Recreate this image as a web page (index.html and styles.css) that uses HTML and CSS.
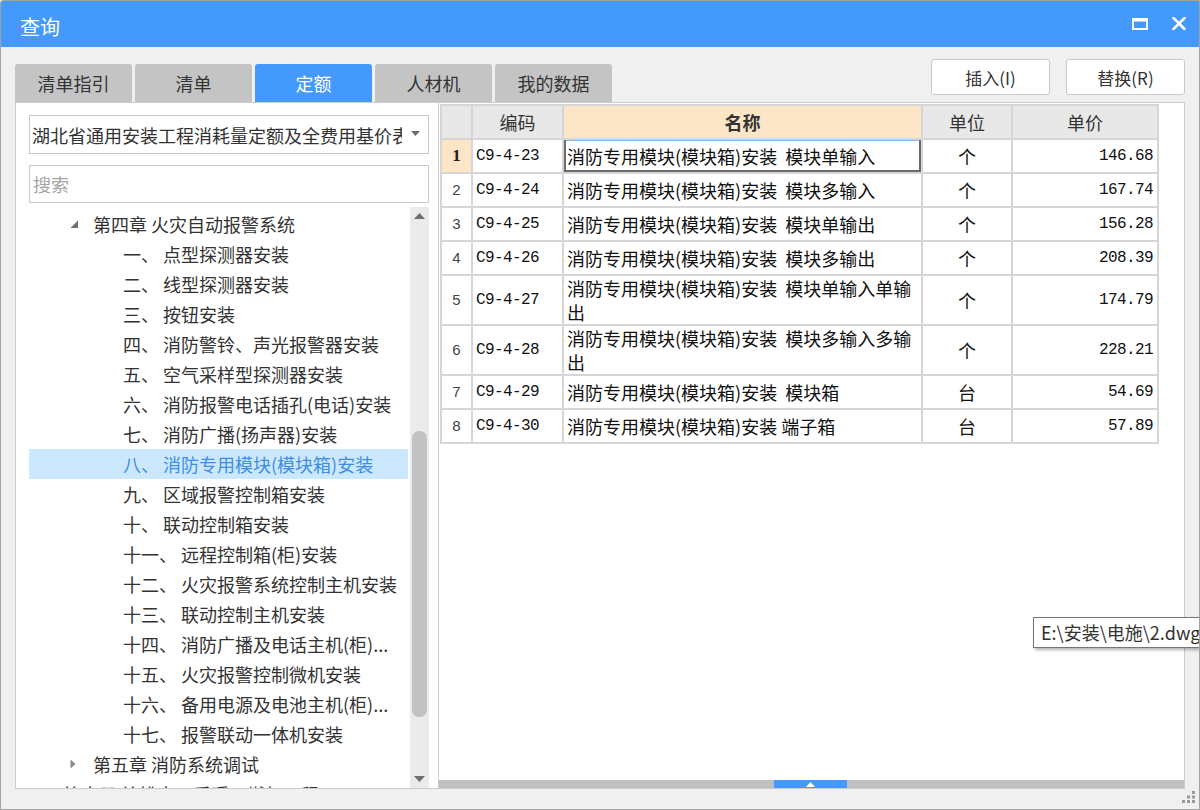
FILE: index.html
```html
<!DOCTYPE html>
<html lang="zh-CN">
<head>
<meta charset="utf-8">
<title>查询</title>
<link rel="stylesheet" href="styles.css">
</head>
<body>
<div class="window">
  <div class="titlebar">
    <span class="title">查询</span>
    <div class="win-ctrls">
      <svg class="ico-max" width="16" height="12" viewBox="0 0 16 12"><rect x="1" y="1.5" width="14" height="9.5" fill="none" stroke="#fff" stroke-width="2"/><rect x="0" y="0" width="16" height="3.5" fill="#fff"/></svg>
      <svg class="ico-close" width="14" height="13" viewBox="0 0 14 13"><path d="M1.5 1 L12.5 12 M12.5 1 L1.5 12" stroke="#fff" stroke-width="2.6" stroke-linecap="square"/></svg>
    </div>
  </div>
  <div class="body">
    <div class="toolbar">
      <div class="tabs">
        <div class="tab">清单指引</div>
        <div class="tab">清单</div>
        <div class="tab active">定额</div>
        <div class="tab">人材机</div>
        <div class="tab">我的数据</div>
      </div>
      <div class="actions">
        <button class="btn">插入(I)</button>
        <button class="btn">替换(R)</button>
      </div>
    </div>
    <div class="panes">
      <div class="left">
        <div class="combo">
          <span class="combo-text">湖北省通用安装工程消耗量定额及全费用基价表</span>
          <span class="combo-arrow"><svg width="9" height="5" viewBox="0 0 9 5"><polygon points="0,0 9,0 4.5,5" fill="#6d6d6d"/></svg></span>
        </div>
        <input class="search" type="text" placeholder="搜索">
        <div class="tree-wrap">
          <div class="tree">
            <div class="row lv1"><span class="twisty"><svg width="9" height="9" viewBox="0 0 9 9"><polygon points="8,0.5 8,8 0.5,8" fill="#707070"/></svg></span><span>第四章 火灾自动报警系统</span></div>
            <div class="row lv2">一、 点型探测器安装</div>
            <div class="row lv2">二、 线型探测器安装</div>
            <div class="row lv2">三、 按钮安装</div>
            <div class="row lv2">四、 消防警铃、声光报警器安装</div>
            <div class="row lv2">五、 空气采样型探测器安装</div>
            <div class="row lv2">六、 消防报警电话插孔(电话)安装</div>
            <div class="row lv2">七、 消防广播(扬声器)安装</div>
            <div class="row lv2 selected">八、 消防专用模块(模块箱)安装</div>
            <div class="row lv2">九、 区域报警控制箱安装</div>
            <div class="row lv2">十、 联动控制箱安装</div>
            <div class="row lv2">十一、 远程控制箱(柜)安装</div>
            <div class="row lv2">十二、 火灾报警系统控制主机安装</div>
            <div class="row lv2">十三、 联动控制主机安装</div>
            <div class="row lv2">十四、 消防广播及电话主机(柜)...</div>
            <div class="row lv2">十五、 火灾报警控制微机安装</div>
            <div class="row lv2">十六、 备用电源及电池主机(柜)...</div>
            <div class="row lv2">十七、 报警联动一体机安装</div>
            <div class="row lv1"><span class="twisty"><svg width="6" height="10" viewBox="0 0 6 10"><polygon points="0.5,0.5 5.5,5 0.5,9.5" fill="#8a8a8a"/></svg></span><span>第五章 消防系统调试</span></div>
            <div class="row lv0">第十册 给排水、采暖、燃气工程</div>
          </div>
          <div class="vscroll">
            <div class="varrow"><svg width="11" height="6" viewBox="0 0 11 6"><polygon points="0,6 11,6 5.5,0" fill="#6e6e6e"/></svg></div>
            <div class="vtrack"><div class="vthumb"></div></div>
            <div class="varrow"><svg width="11" height="6" viewBox="0 0 11 6"><polygon points="0,0 11,0 5.5,6" fill="#6e6e6e"/></svg></div>
          </div>
        </div>
      </div>
      <div class="right">
        <div class="grid-area">
          <table class="grid">
            <colgroup><col class="c-num"><col class="c-code"><col class="c-name"><col class="c-unit"><col class="c-price"></colgroup>
            <thead>
              <tr><th></th><th>编码</th><th class="h-name">名称</th><th>单位</th><th>单价</th></tr>
            </thead>
            <tbody>
              <tr><td class="num cur">1</td><td class="code cur-code">C9-4-23</td><td class="name focus">消防专用模块(模块箱)安装&nbsp; 模块单输入</td><td class="unit">个</td><td class="price">146.68</td></tr>
              <tr><td class="num">2</td><td class="code">C9-4-24</td><td class="name">消防专用模块(模块箱)安装&nbsp; 模块多输入</td><td class="unit">个</td><td class="price">167.74</td></tr>
              <tr><td class="num">3</td><td class="code">C9-4-25</td><td class="name">消防专用模块(模块箱)安装&nbsp; 模块单输出</td><td class="unit">个</td><td class="price">156.28</td></tr>
              <tr><td class="num">4</td><td class="code">C9-4-26</td><td class="name">消防专用模块(模块箱)安装&nbsp; 模块多输出</td><td class="unit">个</td><td class="price">208.39</td></tr>
              <tr class="tall"><td class="num">5</td><td class="code">C9-4-27</td><td class="name">消防专用模块(模块箱)安装&nbsp; 模块单输入单输<br>出</td><td class="unit">个</td><td class="price">174.79</td></tr>
              <tr class="tall"><td class="num">6</td><td class="code">C9-4-28</td><td class="name">消防专用模块(模块箱)安装&nbsp; 模块多输入多输<br>出</td><td class="unit">个</td><td class="price">228.21</td></tr>
              <tr><td class="num">7</td><td class="code">C9-4-29</td><td class="name">消防专用模块(模块箱)安装&nbsp; 模块箱</td><td class="unit">台</td><td class="price">54.69</td></tr>
              <tr><td class="num">8</td><td class="code">C9-4-30</td><td class="name">消防专用模块(模块箱)安装 端子箱</td><td class="unit">台</td><td class="price">57.89</td></tr>
            </tbody>
          </table>
        </div>
        <div class="hscroll"><div class="hthumb"><svg width="9" height="5" viewBox="0 0 9 5"><polygon points="0,5 9,5 4.5,0" fill="#fff"/></svg></div></div>
      </div>
    </div>
    <div class="statusbar">
      <svg class="grip" width="14" height="12" viewBox="0 0 14 12"><rect x="10" y="0" width="3" height="3" fill="#9a9a9a"/><rect x="5" y="4.5" width="3" height="3" fill="#9a9a9a"/><rect x="10" y="4.5" width="3" height="3" fill="#9a9a9a"/><rect x="0" y="9" width="3" height="3" fill="#9a9a9a"/><rect x="5" y="9" width="3" height="3" fill="#9a9a9a"/><rect x="10" y="9" width="3" height="3" fill="#9a9a9a"/></svg>
    </div>
  </div>
  <div class="tooltip">E:\安装\电施\2.dwg</div>
</div>
</body>
</html>
```

FILE: styles.css
```css
html, body {
  margin: 0;
  padding: 0;
  overflow: hidden;
  background: #f0f0f0;
}

.window {
  position: relative;
  width: 1200px;
  height: 810px;
  box-sizing: border-box;
  border: 1px solid #a3a3a3;
  border-top-left-radius: 3px;
  background: #f0f0f0;
  overflow: hidden;
  display: flex;
  flex-direction: column;
  font-family: "Noto Sans CJK SC", "Noto Sans", sans-serif;
  color: #333;
}

.titlebar {
  height: 46px;
  flex: none;
  background: #4499fc;
  display: flex;
  align-items: center;
  padding: 0 13px 0 19px;
}

.title {
  color: #fff;
  font-size: 20px;
  flex: 1;
  line-height: 1;
  margin-top: 6px;
}

.win-ctrls {
  display: flex;
  align-items: center;
  gap: 24px;
  margin-top: -1px;
}

.body {
  flex: 1;
  display: flex;
  flex-direction: column;
  padding: 0 14px 0 14px;
  min-height: 0;
}

.toolbar {
  height: 55px;
  flex: none;
  display: flex;
  justify-content: space-between;
}

.tabs {
  display: flex;
  gap: 3px;
  margin-top: 17px;
}

.tab {
  width: 117px;
  height: 38px;
  box-sizing: border-box;
  background: #c4c4c4;
  border-radius: 3px 3px 0 0;
  font-size: 18px;
  line-height: 38px;
  text-align: center;
  color: #333;
}

.tab.active {
  background: #4499fc;
  color: #fff;
}

.actions {
  display: flex;
  gap: 16px;
  margin-top: 12px;
}

.btn {
  width: 119px;
  height: 36px;
  box-sizing: border-box;
  background: #fff;
  border: 1px solid #c9c9c9;
  border-radius: 3px;
  font-family: "Noto Sans CJK SC", "Noto Sans", sans-serif;
  font-size: 17px;
  color: #333;
  padding: 0;
}

.panes {
  flex: 1;
  display: flex;
  min-height: 0;
}

.left {
  width: 423px;
  box-sizing: border-box;
  background: #fff;
  border: 1px solid #cdcdcd;
  border-right: none;
  padding: 12px 9px 0 13px;
  display: flex;
  flex-direction: column;
  min-height: 0;
}

.combo {
  height: 39px;
  flex: none;
  box-sizing: border-box;
  border: 1px solid #c8c8c8;
  display: flex;
  align-items: center;
  padding-left: 2px;
  overflow: hidden;
}

.combo-text {
  flex: 1;
  white-space: nowrap;
  overflow: hidden;
  font-size: 18px;
  color: #333;
}

.combo-arrow {
  width: 26px;
  flex: none;
  display: flex;
  justify-content: center;
  align-items: center;
  margin-top: -2px;
}

.search {
  display: block;
  height: 38px;
  flex: none;
  margin: 11px 0 0;
  box-sizing: border-box;
  border: 1px solid #c8c8c8;
  padding: 0 0 0 3px;
  outline: none;
  width: 100%;
  font-family: "Noto Sans CJK SC", "Noto Sans", sans-serif;
  font-size: 18px;
  color: #333;
  background: #fff;
}

.search::placeholder {
  color: #a6a6a6;
}

.tree-wrap {
  flex: 1;
  margin-top: 4px;
  display: flex;
  min-height: 0;
  overflow: hidden;
}

.tree {
  flex: 1;
  padding-top: 2px;
  overflow: hidden;
  margin-right: 2px;
}

.row {
  height: 30px;
  line-height: 30px;
  font-size: 18px;
  color: #333;
  white-space: nowrap;
  display: flex;
  align-items: center;
}

.row.lv0 {
  padding-left: 34px;
}

.row.lv1 {
  padding-left: 38px;
}

.row.lv2 {
  padding-left: 94px;
}

.twisty {
  width: 26px;
  display: flex;
  align-items: center;
  justify-content: flex-start;
  padding-left: 3px;
  box-sizing: border-box;
}

.row.selected {
  background: #cce8ff;
  color: #3d8ee6;
}

.vscroll {
  width: 19px;
  flex: none;
  background: #ebebeb;
  display: flex;
  flex-direction: column;
}

.varrow {
  height: 18px;
  display: flex;
  align-items: center;
  justify-content: center;
}

.vtrack {
  flex: 1;
  display: flex;
  justify-content: center;
}

.vthumb {
  width: 15px;
  height: 286px;
  margin-top: 206px;
  background: #c2c2c2;
  border-radius: 7px;
}

.right {
  flex: 1;
  box-sizing: border-box;
  background: #fff;
  border: 1px solid #cdcdcd;
  display: flex;
  flex-direction: column;
  min-height: 0;
}

.grid-area {
  flex: 1;
  padding: 1px 0 0 1px;
  overflow: hidden;
}

.grid {
  border-collapse: collapse;
  table-layout: fixed;
  width: 717px;
  font-family: "Noto Sans CJK SC", sans-serif;
  font-size: 17px;
  color: #111;
}

.c-num { width: 31px; }
.c-code { width: 91px; }
.c-name { width: 359px; }
.c-unit { width: 90px; }
.c-price { width: 146px; }

.grid th,
.grid td {
  border: 2px solid #d6d6d6;
  padding: 0 3px;
  line-height: 18px;
  white-space: nowrap;
  overflow: hidden;
}

.grid th {
  height: 32px;
  background: #e8e8e8;
  font-weight: normal;
  font-size: 18px;
  color: #333;
  text-align: center;
}

.grid th.h-name {
  background: #fde5c8;
  font-weight: bold;
}

.grid td {
  height: 32px;
}

.grid td.name {
  font-size: 18px;
}

.grid tr.tall td {
  height: 48px;
  padding-top: 0;
  padding-bottom: 0;
}

.grid tr.tall td.name {
  line-height: 24px;
}

.grid td.num {
  text-align: center;
  font-family: "Liberation Sans", sans-serif;
  font-size: 15px;
  color: #444;
  padding: 0;
}

.grid td.num.cur {
  background: #fde5c8;
  font-family: "Liberation Serif", serif;
  font-weight: bold;
  font-size: 17px;
  color: #222;
}

.grid td.code {
  font-family: "Liberation Mono", monospace;
  font-size: 16px;
  letter-spacing: -0.6px;
}

.grid td.cur-code {
  border-left: 2px solid #3f96f0;
}

.grid td.focus {
  box-shadow: inset 2px 0 0 #6b6b6b, inset -2px 0 0 #6b6b6b, inset 0 -2px 0 #6b6b6b, inset 0 1px 0 #7fb6f0;
}

.grid td.unit {
  text-align: center;
  font-size: 18px;
}

.grid td.price {
  text-align: right;
  font-family: "Liberation Mono", monospace;
  font-size: 16px;
  letter-spacing: -0.6px;
  padding-right: 4px;
}

.hscroll {
  height: 8px;
  flex: none;
  background: #c0c0c0;
  display: flex;
}

.hthumb {
  width: 73px;
  margin-left: 335px;
  background: #4499fc;
  display: flex;
  align-items: center;
  justify-content: center;
}

.statusbar {
  height: 20px;
  flex: none;
  display: flex;
  justify-content: flex-end;
  align-items: flex-end;
  margin-right: -11px;
}

.grip {
  margin-bottom: 6px;
}

.tooltip {
  position: absolute;
  left: 1032px;
  top: 616px;
  height: 31px;
  box-sizing: border-box;
  border: 1px solid #767676;
  background: #fff;
  padding: 0 0 0 7px;
  font-size: 18px;
  line-height: 29px;
  color: #333;
  white-space: nowrap;
  box-shadow: 2px 2px 3px rgba(0, 0, 0, 0.3);
}
```
